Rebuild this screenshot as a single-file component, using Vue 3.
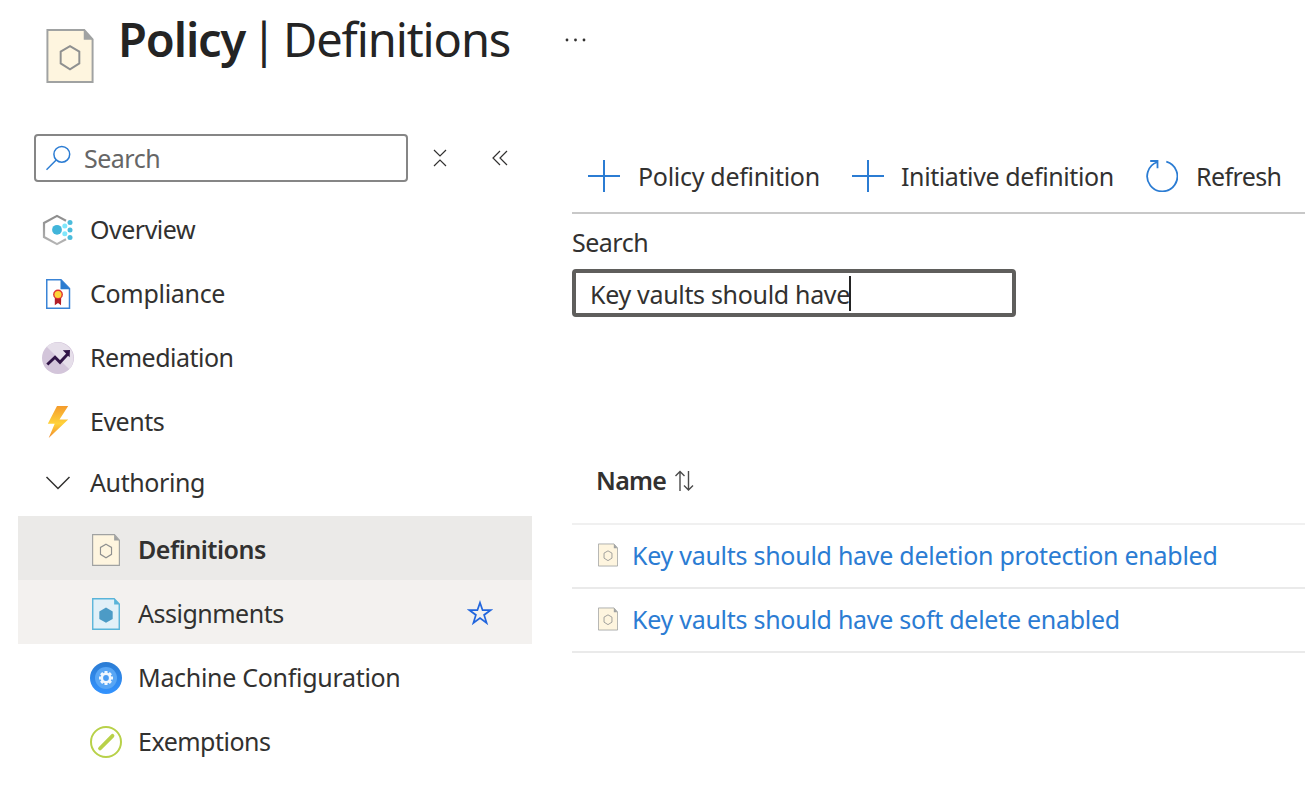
<template>
  <div class="blade">
    <svg class="defs" aria-hidden="true">
      <linearGradient id="g-bolt" x1="0" y1="0" x2="0" y2="1">
        <stop offset="0" stop-color="#f49b2c" />
        <stop offset=".55" stop-color="#ffd23a" />
        <stop offset="1" stop-color="#f08a2c" />
      </linearGradient>
      <linearGradient id="g-gear" x1="0" y1="0" x2="0" y2="1">
        <stop offset="0" stop-color="#2b7cd3" />
        <stop offset="1" stop-color="#3393ff" />
      </linearGradient>
      <linearGradient id="g-hex" x1="0" y1="0" x2="0" y2="1">
        <stop offset="0" stop-color="#8c8c8c" />
        <stop offset="1" stop-color="#b5b5b5" />
      </linearGradient>

      <symbol id="policy" viewBox="0 0 48 55">
        <path d="M1 1H38.500L47 10.500V54H1Z" fill="#fef5df" stroke="#a0a2a2" stroke-width="2" />
        <path d="M38 1L47 11H38Z" fill="#a0a2a2" />
        <path d="M24 17.500L33.500 23V35L24 41L14.500 35V23Z" fill="none" stroke="#8f9090" stroke-width="2" />
      </symbol>
      <symbol id="assignment" viewBox="0 0 48 55">
        <path d="M1.200 1.200H38L46.800 10.500V53.800H1.200Z" fill="#e1f0f8" stroke="#59b4d9" stroke-width="2.400" />
        <path d="M38 1L47 11H38Z" fill="#59b4d9" />
        <path d="M24 16.500L35.500 23V36L24 42.500L12.500 36V23Z" fill="#4c9bc6" />
      </symbol>
      <symbol id="overview" viewBox="0 0 32 32">
        <path d="M24 6.700L15 1.900L2 9V23L15 30.100L24 25.300" fill="none" stroke="url(#g-hex)" stroke-width="2.200" />
        <circle cx="15" cy="15.800" r="4.900" fill="#41b5da" />
        <g fill="#7fe7fb">
          <circle cx="22.800" cy="12" r="2.500" />
          <circle cx="22.800" cy="19.700" r="2.500" />
        </g>
        <g fill="#4bbcdc">
          <circle cx="28" cy="8.500" r="2.500" />
          <circle cx="28" cy="16" r="2.500" />
          <circle cx="28" cy="23.500" r="2.500" />
        </g>
      </symbol>
      <symbol id="compliance" viewBox="0 0 32 32">
        <path d="M4.750 1.750H19L27.500 10.500V30.250H4.750Z" fill="#fff" stroke="#3a84d6" stroke-width="1.500" />
        <path d="M18.500 1.500L28 11.200H18.500Z" fill="#2b7cd0" />
        <path d="M12.800 19H19.200L19 27.200L16 25L12.800 27.200Z" fill="#b11e28" />
        <circle cx="16" cy="16.400" r="4.900" fill="#dd3232" />
        <circle cx="16" cy="16.400" r="3.500" fill="#fdd53a" />
      </symbol>
      <symbol id="remediation" viewBox="0 0 32 32">
        <circle cx="16" cy="16" r="16" fill="#d3c5da" />
        <path d="M4.700 4.700A16 16 0 0 1 27.300 27.300Z" fill="#e6dfea" />
        <path d="M5.300 22.500L13 15.300L18 20.300L26 11.700" fill="none" stroke="#301446" stroke-width="2.900" />
        <path d="M20.800 8.300L28 8L27.600 15.200Z" fill="#301446" />
      </symbol>
      <symbol id="events" viewBox="0 0 32 32">
        <path d="M15 0H26.200L17.500 13.500H26.200L6.700 32L12.700 17.800H5.800Z" fill="url(#g-bolt)" />
      </symbol>
      <symbol id="machine" viewBox="0 0 32 32">
        <circle cx="16" cy="16" r="16" fill="url(#g-gear)" />
        <circle cx="16" cy="16" r="11" fill="#58a6f5" />
        <g stroke="#f0f7fe" stroke-width="3">
          <path d="M16 9V23M9 16H23M11.100 11.100L20.900 20.900M20.900 11.100L11.100 20.900" />
        </g>
        <circle cx="16" cy="16" r="5.400" fill="#f0f7fe" />
        <circle cx="16" cy="16" r="2.900" fill="#4a9df3" />
      </symbol>
      <symbol id="exemption" viewBox="0 0 32 32">
        <circle cx="16" cy="16" r="15" fill="#fff" stroke="#b8d149" stroke-width="2" />
        <path d="M10 22.500L22.500 9.800" stroke="#b8d149" stroke-width="3.800" stroke-linecap="round" />
      </symbol>
    </svg>

    <header class="header">
      <svg class="header-icon"><use href="#policy" /></svg>
      <h1 class="title"><b>Policy</b><span class="bar">|</span><span class="sub">Definitions</span></h1>
      <svg class="more" viewBox="0 0 24 4" fill="#323130">
        <circle cx="3" cy="2" r="1.400" />
        <circle cx="11.500" cy="2" r="1.400" />
        <circle cx="20" cy="2" r="1.400" />
      </svg>
    </header>

    <div class="body">
      <aside class="sidebar">
        <div class="menu-tools">
          <div class="menu-search">
            <svg viewBox="0 0 26 26" width="26" height="26" fill="none" stroke="#2b7cd3" stroke-width="1.500">
              <circle cx="15.800" cy="9.300" r="7.900" />
              <path d="M10.200 15L0.500 24.700" />
            </svg>
            <span>Search</span>
          </div>
          <svg class="collapse-all" viewBox="0 0 14 18" fill="none" stroke="#323130" stroke-width="1.200">
            <path d="M1 1L7 7L13 1M1 17L7 11L13 17" />
          </svg>
          <svg class="collapse" viewBox="0 0 16 16" fill="none" stroke="#323130" stroke-width="1.200">
            <path d="M8 1L1 8L8 15M15 1L8 8L15 15" />
          </svg>
        </div>

        <nav>
          <a v-for="item in topItems" :key="item.icon" class="item">
            <svg class="icon"><use :href="'#' + item.icon" /></svg>
            <span :class="['label', item.icon]">{{ item.label }}</span>
          </a>
          <div class="group">
            <svg class="chevron" viewBox="0 0 26 14" fill="none" stroke="#323130" stroke-width="1.500">
              <path d="M1.500 1L13 12.500L24.500 1" />
            </svg>
            <span class="label">Authoring</span>
          </div>
          <a
            v-for="item in authoringItems"
            :key="item.icon"
            :class="['item', 'nested', { selected: item.selected, hovered: item.hovered }]">
            <svg class="icon"><use :href="'#' + item.icon" /></svg>
            <span :class="['label', item.icon]">{{ item.label }}</span>
            <svg v-if="item.hovered" class="star" viewBox="0 0 24 24" fill="none" stroke="#2266dd" stroke-width="1.600">
              <path d="M12 2.500L14.400 9.400H21.700L15.800 13.800L18.100 21.200L12 16.700L5.900 21.200L8.200 13.800L2.300 9.400H9.600Z" />
            </svg>
          </a>
        </nav>
      </aside>

      <main class="content">
        <div class="toolbar">
          <button class="command cmd-policy">
            <svg viewBox="0 0 32 32" stroke="#2b7cd3" stroke-width="2"><path d="M16 0V32M0 16H32" /></svg>
            <span>Policy definition</span>
          </button>
          <button class="command cmd-initiative">
            <svg viewBox="0 0 32 32" stroke="#2b7cd3" stroke-width="2"><path d="M16 0V32M0 16H32" /></svg>
            <span>Initiative definition</span>
          </button>
          <button class="command cmd-refresh">
            <svg viewBox="0 0 32 32" fill="none" stroke="#2b7cd3" stroke-width="1.800">
              <path d="M20.300 1.700A15.100 15.100 0 1 1 11.300 2M4.200 1H11.500V8.300" />
            </svg>
            <span>Refresh</span>
          </button>
        </div>

        <div class="filter">
          <label>Search</label>
          <div class="filter-box"><span>{{ query }}</span><i class="caret"></i></div>
        </div>

        <div class="table">
          <div class="thead">
            <span>Name</span>
            <svg viewBox="0 0 20 22" fill="none" stroke="#4a4a4a" stroke-width="1.400">
              <path d="M6 21V1.500M1.500 6L6 1.500L10.500 6M14.500 1V20M10 15.500L14.500 20L19 15.500" />
            </svg>
          </div>
          <div v-for="row in rows" :key="row" class="row">
            <svg><use href="#policy" /></svg>
            <a>{{ row }}</a>
          </div>
        </div>
      </main>
    </div>
  </div>
</template>

<script setup>
import { ref } from 'vue'

const query = ref('Key vaults should have')

const topItems = [
  { icon: 'overview', label: 'Overview' },
  { icon: 'compliance', label: 'Compliance' },
  { icon: 'remediation', label: 'Remediation' },
  { icon: 'events', label: 'Events' }
]

const authoringItems = [
  { icon: 'policy', label: 'Definitions', selected: true },
  { icon: 'assignment', label: 'Assignments', hovered: true },
  { icon: 'machine', label: 'Machine Configuration' },
  { icon: 'exemption', label: 'Exemptions' }
]

const rows = [
  'Key vaults should have deletion protection enabled',
  'Key vaults should have soft delete enabled'
]
</script>

<style>
body {
  background: #fff;
  overflow: hidden;
}
</style>

<style scoped>
.blade {
  width: 1305px;
  height: 785px;
  overflow: hidden;
  box-sizing: border-box;
  font-family: "Noto Sans", "Open Sans", sans-serif;
  font-size: 25px;
  line-height: 32px;
  color: #323130;
  white-space: nowrap;
}

.defs {
  position: absolute;
  width: 0;
  height: 0;
}

svg {
  flex: none;
}

.header {
  display: flex;
  align-items: flex-start;
  height: 134px;
  padding-left: 46px;
}

.header-icon {
  width: 48px;
  height: 54px;
  margin-top: 29px;
}

.title {
  display: flex;
  margin: 7px 0 0 24px;
  width: 397px;
  font-size: 47px;
  line-height: 64px;
  font-weight: 400;
  color: #242424;
}

.title b {
  width: 133px;
  font-weight: 600;
  letter-spacing: -1.1px;
}

.title .bar {
  width: 32px;
}

.title .sub {
  letter-spacing: -1.1px;
}

.more {
  width: 24px;
  height: 4px;
  margin: 38px 0 0 49px;
}

.body {
  display: flex;
}

.sidebar {
  width: 532px;
  margin-right: 40px;
}

.menu-tools {
  display: flex;
  align-items: center;
  height: 48px;
  margin-bottom: 16px;
  padding-left: 34px;
}

.menu-search {
  display: flex;
  align-items: center;
  gap: 12px;
  width: 374px;
  height: 48px;
  box-sizing: border-box;
  padding-left: 10px;
  border: 2px solid #868686;
  border-radius: 4px;
  color: #666;
}

.menu-search span {
  padding-bottom: 1px;
  letter-spacing: -0.5px;
}

.collapse-all {
  width: 14px;
  height: 18px;
  margin-left: 25px;
}

.collapse {
  width: 16px;
  height: 16px;
  margin-left: 45px;
}

.item {
  display: flex;
  align-items: center;
  gap: 16px;
  height: 64px;
  box-sizing: border-box;
  margin-left: 18px;
  padding-left: 24px;
}

.nested {
  padding: 4px 0 0 72px;
}

.label {
  padding-bottom: 2px;
  letter-spacing: -0.5px;
}

.label.compliance,
.label.machine {
  letter-spacing: -0.3px;
}

.icon {
  width: 32px;
  height: 32px;
}

.selected {
  background: #ebeae8;
  font-weight: 600;
}

.hovered {
  background: #f3f1ef;
}

.star {
  width: 26px;
  height: 26px;
  margin: 0 39px 3px auto;
}

.group {
  display: flex;
  align-items: center;
  gap: 19px;
  height: 62px;
  padding: 0 0 4px 45px;
  box-sizing: border-box;
}

.group .label {
  letter-spacing: -0.4px;
}

.chevron {
  width: 26px;
  height: 14px;
}

.content {
  flex: 1;
  min-width: 0;
}

.toolbar {
  display: flex;
  align-items: center;
  height: 80px;
  box-sizing: border-box;
  padding: 6px 0 0 16px;
  border-bottom: 2px solid #c8c8c8;
}

.command {
  display: flex;
  align-items: center;
  flex: none;
  padding: 0;
  border: 0;
  background: none;
  font: inherit;
  letter-spacing: -0.3px;
  color: inherit;
}

.command svg {
  width: 32px;
  height: 32px;
  margin-right: 18px;
}

.cmd-policy {
  width: 264px;
}

.cmd-initiative {
  width: 294px;
  letter-spacing: -0.4px;
}

.cmd-initiative svg {
  margin-right: 17px;
}

.cmd-refresh {
  letter-spacing: -0.6px;
}

.filter {
  padding-top: 12px;
}

.filter label {
  display: block;
  letter-spacing: -0.5px;
}

.filter-box {
  display: flex;
  align-items: center;
  width: 444px;
  height: 48px;
  margin-top: 11px;
  padding: 2px 0 0 14px;
  box-sizing: border-box;
  border: 4px solid #5f5e5c;
  border-radius: 4px;
  letter-spacing: -0.32px;
}

.caret {
  width: 2px;
  height: 35px;
  margin: -1px 0 0 -1px;
  background: #242424;
}

.table {
  margin-top: 120px;
}

.thead {
  display: flex;
  align-items: center;
  height: 88px;
  box-sizing: border-box;
  padding-left: 24px;
  border-bottom: 2px solid #f0f0f0;
  font-weight: 600;
  letter-spacing: -0.7px;
}

.thead svg {
  width: 20px;
  height: 22px;
  margin: 1px 0 0 8px;
}

.row {
  display: flex;
  align-items: center;
  height: 64px;
  box-sizing: border-box;
  padding: 0 0 2px 26px;
  border-bottom: 2px solid #eaeaea;
  letter-spacing: -0.27px;
  color: #2b7cd3;
}

.row svg {
  width: 20px;
  height: 24px;
  margin-right: 14px;
}
</style>
